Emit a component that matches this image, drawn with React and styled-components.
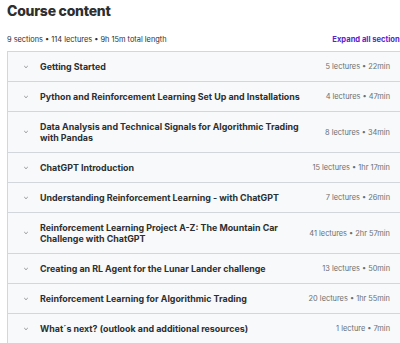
import React from "react";
import styled, { createGlobalStyle } from "styled-components";

const Global = createGlobalStyle`
  html, body { margin: 0; padding: 0; background: #fff; overflow: hidden; }
  body { font-family: Inter, "Noto Sans", sans-serif; color: #2d2f31; }
`;

const Page = styled.div`
  width: 397px;
  padding: 0 0 0 7px;
`;

const Title = styled.h2`
  margin: 0;
  padding-top: 1px;
  font-size: 14px;
  line-height: 19px;
  font-weight: 800;
  letter-spacing: -0.25px;
  color: #2d2f31;
`;

const SubBar = styled.div`
  display: flex;
  align-items: center;
  justify-content: space-between;
  margin-top: 14px;
  height: 11px;
  margin-bottom: 6px;
`;

const Stats = styled.span`
  font-size: 7.4px;
  color: #2d2f31;
`;

const ExpandAll = styled.button`
  border: 0;
  background: none;
  padding: 0;
  font: inherit;
  font-size: 7.6px;
  font-weight: 700;
  color: #5624d0;
  white-space: nowrap;
`;

const Panel = styled.div`
  border: 1px solid #d1d7dc;
  border-bottom: 0;
`;

const Row = styled.div`
  display: flex;
  align-items: center;
  padding: 9px 13px 9px 15px;
  background: #f7f9fa;
  border-bottom: 1px solid #d1d7dc;
`;

const Chevron = styled.svg`
  flex: none;
  width: 6px;
  height: 6px;
  margin-right: 11px;
  color: #6a6f73;
`;

const SectionTitle = styled.span`
  flex: 1;
  font-size: 8.9px;
  line-height: 11px;
  font-weight: 700;
  color: #2d2f31;
`;

const Meta = styled.span`
  flex: none;
  margin-left: 25px;
  font-size: 7.4px;
  line-height: 11px;
  color: #6a6f73;
`;

const sections = [
  ["Getting Started", "5 lectures • 22min"],
  ["Python and Reinforcement Learning Set Up and Installations", "4 lectures • 47min"],
  ["Data Analysis and Technical Signals for Algorithmic Trading with Pandas", "8 lectures • 34min"],
  ["ChatGPT Introduction", "15 lectures • 1hr 17min"],
  ["Understanding Reinforcement Learning - with ChatGPT", "7 lectures • 26min"],
  ["Reinforcement Learning Project A-Z: The Mountain Car Challenge with ChatGPT", "41 lectures • 2hr 57min"],
  ["Creating an RL Agent for the Lunar Lander challenge", "13 lectures • 50min"],
  ["Reinforcement Learning for Algorithmic Trading", "20 lectures • 1hr 55min"],
  ["What´s next? (outlook and additional resources)", "1 lecture • 7min"],
];

export default function App() {
  return (
    <>
      <Global />
      <Page>
        <Title>Course content</Title>
        <SubBar>
          <Stats>9 sections • 114 lectures • 9h 15m total length</Stats>
          <ExpandAll>Expand all sections</ExpandAll>
        </SubBar>
        <Panel>
          {sections.map(([t, m]) => (
            <Row key={t}>
              <Chevron viewBox="0 0 10 10" fill="none" stroke="currentColor" strokeWidth="1.2" strokeLinecap="round" strokeLinejoin="round">
                <path d="M2.5 3.8 L5 6.2 L7.5 3.8" />
              </Chevron>
              <SectionTitle>{t}</SectionTitle>
              <Meta>{m}</Meta>
            </Row>
          ))}
        </Panel>
      </Page>
    </>
  );
}
